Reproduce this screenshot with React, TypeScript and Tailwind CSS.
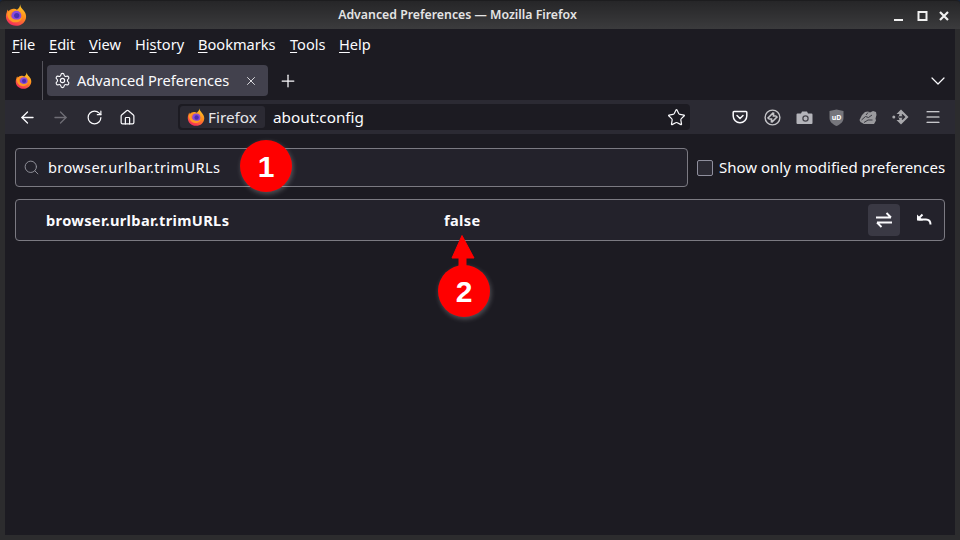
import { ChevronDown, Home, Menu, Plus, RotateCw, Search, Settings, Star, X, ArrowLeft, ArrowRight } from 'lucide-react'

const MENUS = [
  { before: '', key: 'F', after: 'ile', w: 'w-[37px]' },
  { before: '', key: 'E', after: 'dit', w: 'w-[40px]' },
  { before: '', key: 'V', after: 'iew', w: 'w-[46px]' },
  { before: 'Hi', key: 's', after: 'tory', w: 'w-[63px]' },
  { before: '', key: 'B', after: 'ookmarks', w: 'w-[92px]' },
  { before: '', key: 'T', after: 'ools', w: 'w-[49px]' },
  { before: '', key: 'H', after: 'elp', w: 'w-[40px]' },
]

function FirefoxLogo({ size }: { size: number }) {
  const id = `ff${size}`
  return (
    <svg width={size} height={size} viewBox="0 0 24 24">
      <defs>
        <linearGradient id={id} x1="0.8" y1="0" x2="0.35" y2="1">
          <stop offset="0" stopColor="#ffd22a" />
          <stop offset="0.5" stopColor="#ff8a1c" />
          <stop offset="1" stopColor="#f52a5f" />
        </linearGradient>
      </defs>
      <path
        d="M16.500 0.300c.2 2.800 1.800 4.300 3.400 6.200 1.900 2.200 3.100 4.400 3.100 7 0 5.700-4.800 10.300-11 10.300S1 19.200 1 13.400c0-1.600.3-3 .9-4.400.2-1.200.7-2.200 1.300-3 0 .9.200 1.500.6 1.900C5.200 6.400 7.200 5.200 9.600 5.300c1.200-.1 2.400.2 3.400.9 2-1.200 3.600-3.400 3.500-5.900z"
        fill={`url(#${id})`}
      />
      <circle cx="12.400" cy="12.800" r="5.400" fill="#8a4bd8" />
      <circle cx="12.800" cy="12.600" r="2.900" fill="#4a2fb0" />
      <path d="M2.500 10c1.500-2.400 4.200-3.400 7.200-2.600-2 .5-3.500 1.500-3.900 3.200-.5 2.600 1.800 5.600 5.700 6.300 3.300.5 6-1 7.300-3.400-.3 4-3.700 6.800-8 6.500C5.800 19.700 2.200 15 2.500 10z" fill="#ff9a24" />
    </svg>
  )
}

function Badge({ n, className }: { n: string; className: string }) {
  return (
    <div
      className={`absolute flex h-[52px] w-[52px] items-center justify-center rounded-full bg-[#ff0000] text-[30px] font-bold text-white shadow-[1px_2px_5px_rgba(255,255,255,0.25)] ${className}`}
      style={{ fontFamily: '"Liberation Sans", sans-serif' }}
    >
      {n}
    </div>
  )
}

export default function App() {
  return (
    <div className="relative h-[540px] w-[960px] overflow-hidden bg-[#14233f]">
      <div
        className="flex h-full w-full flex-col rounded-t-[4px] bg-[#2c2c2e] pb-[5px] text-[#fbfbfe]"
        style={{ fontFamily: '"Noto Sans", sans-serif' }}
      >
        {/* title bar */}
        <div className="relative flex h-[29px] shrink-0 items-center justify-center rounded-t-[4px] border-t border-[#1d1d1f] bg-gradient-to-b from-[#262628] to-[#3b3b3d] pr-[45px] pt-[1px] text-[12.3px] font-semibold text-[#e4e4e4]">
          <div className="absolute left-[5px] top-[3px]">
            <FirefoxLogo size={22} />
          </div>
          Advanced Preferences — Mozilla Firefox
          <svg width="56" height="12" viewBox="0 0 56 12" className="absolute left-[893px] top-[9px]" fill="none" stroke="#f0f0f0" strokeWidth="2">
            <path d="M1 10h9" />
            <path d="M25.500 2h8v8h-8z" />
            <path d="M47 2l8 8M55 2l-8 8" strokeWidth="2.200" />
          </svg>
        </div>

        <div className="mx-[5px] flex min-h-0 flex-1 flex-col">
          {/* menu bar */}
          <div className="flex h-[32px] shrink-0 items-center bg-[#1c1b22] pl-[7px] text-[14.6px]">
            {MENUS.map((m) => (
              <span key={m.key} className={m.w}>
                {m.before}
                <span className="underline underline-offset-2">{m.key}</span>
                {m.after}
              </span>
            ))}
          </div>

          {/* tab strip */}
          <div className="flex h-[39px] shrink-0 items-center bg-[#1c1b22]">
            <div className="flex w-[37px] justify-center">
              <FirefoxLogo size={17} />
            </div>
            <div className="h-full w-px bg-[#55545c]" />
            <div className="ml-[4px] flex h-[31px] w-[221px] items-center rounded-[4px] bg-[#42414d] pl-[7px] pr-[10px]">
              <Settings size={17} strokeWidth={1.6} />
              <span className="ml-[6px] flex-1 text-[14.6px]">Advanced Preferences</span>
              <X size={14} strokeWidth={1.4} />
            </div>
            <Plus size={20} strokeWidth={1.5} className="ml-[10px]" />
            <ChevronDown size={24} strokeWidth={1.2} className="ml-auto mr-[5px]" />
          </div>

          {/* nav bar */}
          <div className="flex h-[34px] shrink-0 items-center bg-[#2b2a33]">
            <ArrowLeft size={19} strokeWidth={1.6} className="ml-[13px]" />
            <ArrowRight size={19} strokeWidth={1.6} className="ml-[14px] text-[#6f6e76]" />
            <RotateCw size={17} strokeWidth={1.7} className="ml-[16px]" />
            <Home size={17} strokeWidth={1.7} className="ml-[16px]" />
            <div className="ml-[42px] flex h-[26px] w-[512px] items-center rounded-[4px] bg-[#1c1b22] pl-[2px] pr-[4px]">
              <div className="flex h-[22px] w-[85px] items-center rounded-[3px] bg-[#2b2a33] pl-[7px]">
                <FirefoxLogo size={18} />
                <span className="ml-[3px] text-[15.3px] text-[#e6e6ea]">Firefox</span>
              </div>
              <span className="ml-[8px] flex-1 text-[15.3px]">about:config</span>
              <Star size={19} strokeWidth={1.5} />
            </div>
            <div className="ml-auto flex items-center text-[#d4d4d8]">
              <svg width="16" height="16" viewBox="0 0 16 16" className="text-[#fbfbfe]" fill="none" stroke="currentColor" strokeWidth="1.5">
                <path d="M2 2.500h12a.8.8 0 0 1 .8.8V7a6.800 6.800 0 0 1-13.600 0V3.300a.8.8 0 0 1 .8-.8z" />
                <path d="M5 6.500l3 3 3-3" strokeLinecap="round" />
              </svg>
              <svg width="17" height="17" viewBox="0 0 17 17" className="ml-[16px]" fill="none" stroke="#c4c4c8" strokeWidth="1.400">
                <circle cx="8.500" cy="8.500" r="7.400" />
                <path d="M3.500 9.500l6-6M9.500 3.500v3.500h3M13.500 7.500l-6 6M7.500 13.500V10h-3" strokeWidth="1.700" />
              </svg>
              <svg width="17" height="15" viewBox="0 0 17 15" className="ml-[15px]">
                <path d="M1.500 3.500h3.500l1-2h5l1 2h3.500a1 1 0 0 1 1 1v8.500a1 1 0 0 1-1 1h-14a1 1 0 0 1-1-1v-8.500a1 1 0 0 1 1-1z" fill="#b4b4ba" />
                <circle cx="9.500" cy="8.500" r="2.600" fill="none" stroke="#45444c" strokeWidth="1.300" />
              </svg>
              <div className="relative ml-[16px] flex h-[17px] w-[15px] items-center justify-center">
                <svg width="15" height="17" viewBox="0 0 15 17" className="absolute inset-0">
                  <path d="M.5 2L7.500 .5 14.500 2v7c0 4-3.500 6.500-7 8-3.500-1.500-7-4-7-8z" fill="#76767c" />
                </svg>
                <span className="relative text-[7px] font-bold leading-none text-white">uD</span>
              </div>
              <svg width="18" height="15" viewBox="0 0 18 15" className="ml-[15px]" fill="#9a9a9e">
                <path d="M.5 10L3 5l3-3 3-.500 2 1 3-1.500 3 1 .500 3-1 3.500 .500 2-2 3.500H5L1.500 12z" />
                <path d="M2.500 10l4-3.500 3 1 3.500-2.500M5 12.500l4-2.500h4.500M9 2.500L7 5" stroke="#3a3a42" strokeWidth="1" fill="none" />
              </svg>
              <svg width="17" height="16" viewBox="0 0 17 16" className="ml-[15px]" fill="#a8a8ac">
                <path d="M9 .5l7.500 7.500L9 15.500 4.500 11h3l-1-3 1-3h-3z" />
                <path d="M7 8h5M10 5.500L12.500 8 10 10.500" stroke="#2b2a33" strokeWidth="1.400" fill="none" />
                <circle cx="1.800" cy="8" r="1.500" />
              </svg>
              <Menu size={18} strokeWidth={1.5} className="ml-[15px] mr-[13px] text-[#fbfbfe]" />
            </div>
          </div>

          {/* about:config page */}
          <main className="flex flex-1 flex-col gap-[12px] bg-[#1c1b22] px-[10px] pt-[14px]">
            <div className="flex items-center">
              <div className="flex h-[39px] w-[673px] shrink-0 items-center rounded-[4px] border border-[#7b7a82] bg-[#23222b] pl-[7px]">
                <Search size={17} strokeWidth={1.4} className="text-[#8f8f98]" />
                <span className="ml-[8px] text-[14.6px] tracking-[0.35px]">browser.urlbar.trimURLs</span>
              </div>
              <div className="ml-[9px] h-[16px] w-[16px] shrink-0 rounded-[2px] border border-[#8f8f9d] bg-[#2b2a33]" />
              <span className="ml-[6px] whitespace-nowrap text-[15px]">Show only modified preferences</span>
            </div>
            <div className="flex h-[42px] items-center rounded-[4px] border border-[#7b7a82] bg-[#23222b]">
              <span className="ml-[30px] w-[398px] pt-[1px] text-[14.6px] font-bold tracking-[0.35px]">browser.urlbar.trimURLs</span>
              <span className="pt-[1px] text-[14.6px] font-bold tracking-[0.35px]">false</span>
              <div className="ml-auto flex h-[32px] w-[32px] items-center justify-center rounded-[4px] bg-[#3a3944]">
                <svg width="18" height="18" viewBox="0 0 18 18" fill="none" stroke="#fbfbfe" strokeWidth="1.900">
                  <path d="M1 6.500h15M11.500 2l4.500 4.500" />
                  <path d="M17 11.500H2M6.500 16L2 11.500" />
                </svg>
              </div>
              <svg width="16" height="14" viewBox="0 0 16 14" className="ml-[16px] mr-[12px]" fill="none" stroke="#fbfbfe" strokeWidth="2">
                <path d="M2.500 6.500h7.500c2.500 0 4.500 1.500 4.500 5" />
                <path d="M6.500 1.500L1.500 6.500" />
                <path d="M1 1.500v6h6" fill="#fbfbfe" strokeWidth="0" />
              </svg>
            </div>
          </main>
        </div>
      </div>

      {/* annotations */}
      <Badge n="1" className="left-[240px] top-[140px]" />
      <Badge n="2" className="left-[438px] top-[265px]" />
      <svg width="24" height="32" viewBox="0 0 24 32" className="absolute left-[451px] top-[235px]">
        <path d="M11 0.500L23 23H15V32H8V23H1z" fill="#ff0000" stroke="#ff0000" strokeLinejoin="round" />
      </svg>
    </div>
  )
}
